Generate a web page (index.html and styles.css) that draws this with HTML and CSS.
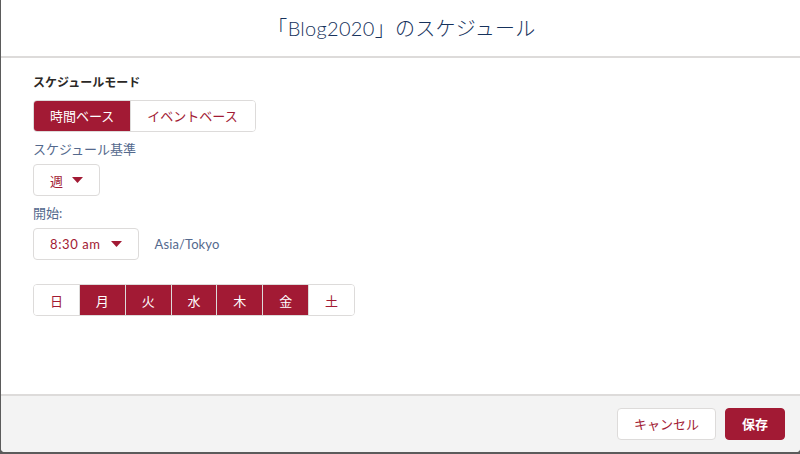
FILE: index.html
```html
<!DOCTYPE html>
<html lang="ja">
<head>
<meta charset="utf-8">
<link rel="stylesheet" href="styles.css">
</head>
<body>
<div class="modal">
  <header class="modal-header">
    <h2 class="title">「Blog2020」のスケジュール</h2>
  </header>
  <main class="modal-body">
    <div class="label-bold">スケジュールモード</div>
    <div class="group mt8">
      <button class="seg selected">時間ベース</button>
      <button class="seg">イベントベース</button>
    </div>
    <div class="label mt8">スケジュール基準</div>
    <div class="select mt6"><span>週</span><svg class="tri" width="11" height="6" viewBox="0 0 11 6"><path d="M0 0H11L5.5 6Z" fill="#a21a34"/></svg></div>
    <div class="label mt8">開始:</div>
    <div class="row mt6">
      <div class="select"><span class="time">8:30 am</span><svg class="tri" width="11" height="6" viewBox="0 0 11 6"><path d="M0 0H11L5.5 6Z" fill="#a21a34"/></svg></div>
      <span class="tz">Asia/Tokyo</span>
    </div>
    <div class="group days mt24">
      <button class="day">日</button>
      <button class="day selected">月</button>
      <button class="day selected">火</button>
      <button class="day selected">水</button>
      <button class="day selected">木</button>
      <button class="day selected">金</button>
      <button class="day">土</button>
    </div>
  </main>
  <footer class="modal-footer">
    <button class="btn neutral">キャンセル</button>
    <button class="btn brand">保存</button>
  </footer>
</div>
</body>
</html>
```
FILE: styles.css
```css
* { box-sizing: border-box; }
html, body { margin: 0; padding: 0; }
body {
  background: #5b5b5b;
  width: 800px;
  height: 454px;
  overflow: hidden;
  font-family: Lato, "Noto Sans CJK JP", sans-serif;
}
.modal {
  margin-left: 1px;
  width: 799px;
  height: 452px;
  background: #fff;
  border-radius: 0 0 4px 4px;
  display: flex;
  flex-direction: column;
  overflow: hidden;
}
.modal-header {
  height: 58px;
  border-bottom: 2px solid #dddbda;
  display: flex;
  align-items: center;
  justify-content: center;
}
.title {
  margin: 0;
  font-weight: 300;
  font-size: 20px;
  color: #16325c;
  line-height: 24px;
  letter-spacing: 0.3px;
  padding-left: 2px;
}
.modal-body {
  flex: 1;
  padding: 16px 32px 0;
  border-bottom: 2px solid #dddbda;
  display: flex;
  flex-direction: column;
  align-items: flex-start;
}
.mt6 { margin-top: 6px; }
.mt8 { margin-top: 8px; }
.mt24 { margin-top: 24px; }
.label-bold {
  font-size: 12px;
  font-weight: 700;
  color: #2b2826;
  line-height: 18px;
}
.label {
  font-size: 13px;
  color: #54698d;
  line-height: 18px;
}
.group {
  display: flex;
  border: 1px solid #dddbda;
  border-radius: 4px;
  overflow: hidden;
}
button {
  font-family: Lato, "Noto Sans CJK JP", sans-serif;
  font-size: 13px;
  margin: 0;
  cursor: pointer;
}
.seg {
  height: 30px;
  border: 0;
  background: #fff;
  color: #a21a34;
  padding: 0 16px;
  line-height: 30px;
}
.seg + .seg { border-left: 1px solid #dddbda; padding-right: 17px; }
.seg.selected { background: #a21a34; color: #fff; }
.select {
  height: 32px;
  border: 1px solid #dddbda;
  border-radius: 4px;
  display: flex;
  align-items: center;
  padding: 0 16px;
  gap: 9px;
  font-size: 13px;
  color: #a21a34;
}
.select .time { letter-spacing: 0.6px; margin-right: 1px; }
.tri { display: block; }
.row {
  display: flex;
  align-items: center;
  gap: 16px;
}
.tz {
  font-size: 13px;
  color: #54698d;
  letter-spacing: 0.1px;
}
.days { width: 322px; }
.day {
  flex: 1;
  height: 30px;
  border: 0;
  background: #fff;
  color: #a21a34;
  padding: 0;
}
.day + .day { border-left: 1px solid #dddbda; }
.day.selected { background: #a21a34; color: #fff; }
.modal-footer {
  height: 56px;
  background: #f3f3f3;
  display: flex;
  align-items: center;
  justify-content: flex-end;
  gap: 9px;
  padding-right: 15px;
}
.btn {
  height: 32px;
  border-radius: 4px;
  padding: 0 16px;
  line-height: 30px;
}
.neutral {
  background: #fff;
  border: 1px solid #dddbda;
  color: #a21a34;
}
.brand {
  background: #a21a34;
  border: 1px solid #a21a34;
  color: #fff;
  font-weight: 700;
}
```
